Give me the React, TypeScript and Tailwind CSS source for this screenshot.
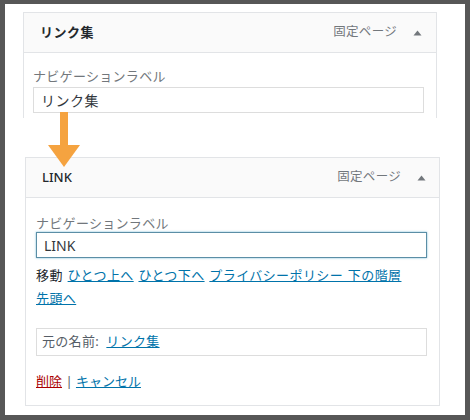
import React from "react";

const font = { fontFamily: '"Noto Sans", "Noto Sans CJK JP", sans-serif' };

function Caret() {
  return (
    <svg width="9" height="6" viewBox="0 0 9 6" className="ml-[16px]">
      <path d="M0.5 5.5 L4.5 0.5 L8.5 5.5 Z" fill="#72777c" />
    </svg>
  );
}

export default function App() {
  return (
    <div className="w-[470px] h-[420px] bg-[#575757] pt-[4px] pl-[5px]" style={font}>
      <div className="relative w-[460px] h-[411px] bg-white flex flex-col">
        {/* Top panel (cropped) */}
        <div className="ml-[18px] mt-[8px] w-[414px] h-[106px] overflow-hidden border-x border-t border-[#e2e4e7] flex flex-col">
          <div className="h-[40px] shrink-0 bg-[#fafafa] border-b border-[#e2e4e7] flex items-center justify-between pl-[16px] pr-[14px]">
            <span className="text-[13px] font-semibold text-[#23282d] tracking-[0.5px]">リンク集</span>
            <div className="flex items-center">
              <span className="text-[12.5px] text-[#72777c] tracking-[0.3px]">固定ページ</span>
              <Caret />
            </div>
          </div>
          <div className="pl-[9px] pr-[12px] pt-[14px] bg-white">
            <div className="text-[13px] leading-[18px] text-[#72777c] tracking-[0.3px]">ナビゲーションラベル</div>
            <div className="mt-[2px] h-[26px] border border-[#dddddd] flex items-center pl-[7px] text-[14px] text-[#32373c] tracking-[0.5px]">
              リンク集
            </div>
          </div>
        </div>

        {/* Bottom panel */}
        <div className="ml-[20px] mt-[39px] w-[415px] border border-[#e2e4e7] flex flex-col">
          <div className="h-[40px] bg-[#fafafa] border-b border-[#e2e4e7] flex items-center justify-between pl-[16px] pr-[13px]">
            <span className="text-[13px] font-medium text-[#23282d]">LINK</span>
            <div className="flex items-center">
              <span className="text-[12.5px] text-[#72777c] tracking-[0.3px]">固定ページ</span>
              <Caret />
            </div>
          </div>
          <div className="pl-[10px] pr-[12px] pt-[17px] pb-[14px] bg-white">
            <div className="text-[13px] leading-[17px] text-[#72777c] tracking-[0.3px]">ナビゲーションラベル</div>
            <div className="h-[26px] border border-[#5b8ea6] shadow-[0_0_2px_rgba(30,140,190,0.6)] flex items-center pl-[7px] text-[14px] text-[#32373c]">
              LINK
            </div>
            <div className="mt-[6px] text-[13px] leading-[23px] text-[#23282d] tracking-[0.4px] [word-spacing:1px]">
              移動{" "}
              <a className="underline text-[#0073aa]">ひとつ上へ</a>{" "}
              <a className="underline text-[#0073aa]">ひとつ下へ</a>{" "}
              <a className="underline text-[#0073aa]">プライバシーポリシー 下の階層</a>
              <br />
              <a className="underline text-[#0073aa]">先頭へ</a>
            </div>
            <div className="mt-[18px] h-[28px] border border-[#dddddd] flex items-center pl-[5px] text-[13px] text-[#555d66] tracking-[0.3px]">
              元の名前:&nbsp;&nbsp;<a className="underline text-[#0073aa]">リンク集</a>
            </div>
            <div className="mt-[15px] text-[13px] leading-[20px] text-[#555d66]">
              <a className="underline text-[#a00]">削除</a> | <a className="underline text-[#0073aa]">キャンセル</a>
            </div>
          </div>
        </div>

        {/* Orange arrow overlay */}
        <svg className="absolute left-[43px] top-[108px]" width="32" height="56" viewBox="0 0 32 56">
          <rect x="12" y="0" width="8" height="34" fill="#f5a340" />
          <path d="M0 33 L32 33 L16 55 Z" fill="#f5a340" />
        </svg>
      </div>
    </div>
  );
}
